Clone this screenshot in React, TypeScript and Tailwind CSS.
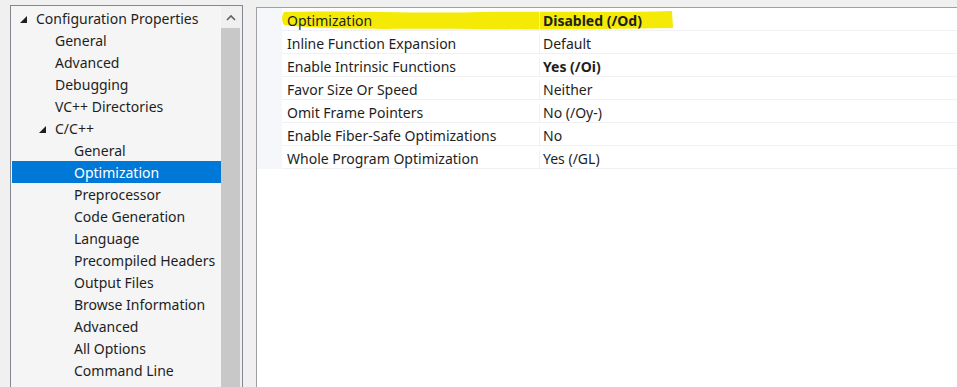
import React from "react";

type TreeItem = { label: string; level: number; expanded?: boolean; selected?: boolean };

const tree: TreeItem[] = [
  { label: "Configuration Properties", level: 0, expanded: true },
  { label: "General", level: 1 },
  { label: "Advanced", level: 1 },
  { label: "Debugging", level: 1 },
  { label: "VC++ Directories", level: 1 },
  { label: "C/C++", level: 1, expanded: true },
  { label: "General", level: 2 },
  { label: "Optimization", level: 2, selected: true },
  { label: "Preprocessor", level: 2 },
  { label: "Code Generation", level: 2 },
  { label: "Language", level: 2 },
  { label: "Precompiled Headers", level: 2 },
  { label: "Output Files", level: 2 },
  { label: "Browse Information", level: 2 },
  { label: "Advanced", level: 2 },
  { label: "All Options", level: 2 },
  { label: "Command Line", level: 2 },
];

const props: { name: string; value: string; bold?: boolean; hl?: boolean }[] = [
  { name: "Optimization", value: "Disabled (/Od)", bold: true, hl: true },
  { name: "Inline Function Expansion", value: "Default" },
  { name: "Enable Intrinsic Functions", value: "Yes (/Oi)", bold: true },
  { name: "Favor Size Or Speed", value: "Neither" },
  { name: "Omit Frame Pointers", value: "No (/Oy-)" },
  { name: "Enable Fiber-Safe Optimizations", value: "No" },
  { name: "Whole Program Optimization", value: "Yes (/GL)" },
];

const indentClass = ["pl-[7px]", "pl-[26px]", "pl-[45px]"];

function Triangle() {
  return (
    <svg width="9" height="9" viewBox="0 0 9 9" className="shrink-0">
      <polygon points="8,1 8,8 1,8" fill="#1e1e1e" />
    </svg>
  );
}

export default function App() {
  return (
    <div
      className="w-[957px] h-[387px] bg-[#f0f0f0] overflow-hidden flex items-start pl-[10px] pt-[5px] gap-[13px] text-[14px] text-[#1e1e1e]"
      style={{ fontFamily: '"Noto Sans", "Open Sans", sans-serif' }}
    >
      {/* Tree panel */}
      <div className="w-[233px] h-[400px] shrink-0 border-l border-t border-r border-[#828790] bg-[#f5f5f5] flex">
        <div className="flex-1 min-w-0 overflow-hidden pt-[1px] pl-[1px]">
          {tree.map((t, i) => (
            <div
              key={i}
              className={`h-[22px] flex items-center leading-none whitespace-nowrap pt-[2px] ${indentClass[t.level]} ${
                t.selected ? "bg-[#0078d7] text-white" : ""
              }`}
            >
              <span className="w-[16px] shrink-0 flex items-center">
                {t.expanded ? <Triangle /> : null}
              </span>
              <span className="ml-[1px]">{t.label}</span>
            </div>
          ))}
        </div>
        <div className="w-[21px] shrink-0 flex flex-col bg-[#f0f0f0]">
          <div className="h-[22px] flex items-center justify-center pr-[2px]">
            <svg width="10" height="7" viewBox="0 0 10 7">
              <path d="M1 6 L5 2 L9 6" stroke="#606060" strokeWidth="1.6" fill="none" />
            </svg>
          </div>
          <div className="flex-1 bg-[#c8c8c8] mr-[2px]" />
        </div>
      </div>

      {/* Property grid */}
      <div className="flex-1 h-[400px] mt-[2px] border-l border-t border-[#a0a0a0] bg-white">
        <div className="flex">
          <div className="w-[25px] bg-[#f5f7fb]" />
          <div className="flex-1">
            {props.map((p, i) => (
              <div key={i} className="relative h-[23px] flex border-b border-[#f0f0f5] leading-none pt-[4px]">
                {p.hl ? (
                  <svg
                    className="absolute left-0 top-0"
                    width="400"
                    height="24"
                    viewBox="0 0 400 24"
                  >
                    <path
                      d="M2 4 C60 2 140 6 200 4 C270 3 330 5 390 3 L391 20 C320 21 250 22 190 21 C120 20 60 23 2 17 C-1 12 0 7 2 4 Z"
                      fill="#f4ea06"
                    />
                  </svg>
                ) : null}
                <div className="relative w-[258px] border-r border-[#f0f0f5] flex items-center pl-[5px]">
                  {p.name}
                </div>
                <div className={`relative flex items-center pl-[3px] ${p.bold ? "font-bold" : ""}`}>
                  {p.value}
                </div>
              </div>
            ))}
          </div>
        </div>
      </div>
    </div>
  );
}
